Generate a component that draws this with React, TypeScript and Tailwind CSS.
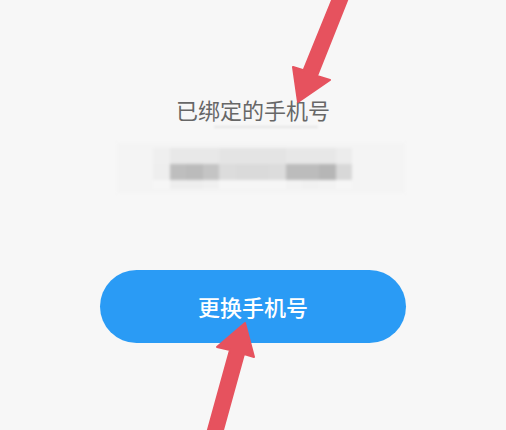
import React from "react";

const row1 = ["#efefef", "#e8e8e8", "#e8e8e8", "#e8e8e8", "#e4e4e4", "#e4e4e4", "#e4e4e4", "#e4e4e4", "#e7e7e7", "#e7e7e7", "#e7e7e7", "#ececec"];
const row2 = ["#eeeeee", "#bebebe", "#bbbbbb", "#c4c4c4", "#dcdcdc", "#dadada", "#dadada", "#dcdcdc", "#bcbcbc", "#bcbcbc", "#b6b6b6", "#d8d8d8"];
const row3 = ["#f6f6f6", "#eeeeee", "#eeeeee", "#f0f0f0", "#f6f6f6", "#f6f6f6", "#f6f6f6", "#f6f6f6", "#f3f3f3", "#f1f1f1", "#f3f3f3", "#f6f6f6"];

function Mosaic() {
  return (
    <div className="mt-[15px] ml-[16px] flex h-[50px] w-[288px] flex-col justify-center bg-[#f4f4f4] pl-[36px] blur-[1.5px]">
      {[row1, row2, row3].map((row, i) => (
        <div key={i} className={`flex ${i === 2 ? "h-[9px]" : "h-[16px]"}`}>
          {row.map((c, j) => (
            <div key={j} className="w-[16.6px]" style={{ backgroundColor: c }} />
          ))}
        </div>
      ))}
    </div>
  );
}

export default function App() {
  return (
    <div
      className="relative flex h-[430px] w-full flex-col items-center overflow-hidden bg-[#f7f7f7] pt-[94px]"
      style={{ fontFamily: '"Noto Sans CJK SC", "Noto Sans", sans-serif' }}
    >
      <h1 className="text-[22px] leading-[30px] font-normal text-[#676767]">已绑定的手机号</h1>
      <div className="mt-[2px] ml-[26px] h-[2px] w-[104px] rounded-full bg-[#e6e6e6] blur-[1px]" />
      <Mosaic />

      <button className="mt-[77px] flex h-[73px] w-[306px] items-center justify-center rounded-full bg-[#2a9bf5] text-[22px] font-medium text-white">
        更换手机号
      </button>

      {/* annotation arrows */}
      <svg className="pointer-events-none absolute inset-0" width="506" height="430" viewBox="0 0 506 430">
        <polygon
          points="337,-12 350,-7 317,76 330,80 298,102 293,67 303.5,70.3"
          fill="#e6525e"
          stroke="#e6525e"
          strokeWidth="2"
          strokeLinejoin="round"
        />
        <polygon
          points="230,350 217,347 245,323 254,357 244,354 219.7,442 205.7,438"
          fill="#e6525e"
          stroke="#e6525e"
          strokeWidth="2"
          strokeLinejoin="round"
        />
      </svg>
    </div>
  );
}
